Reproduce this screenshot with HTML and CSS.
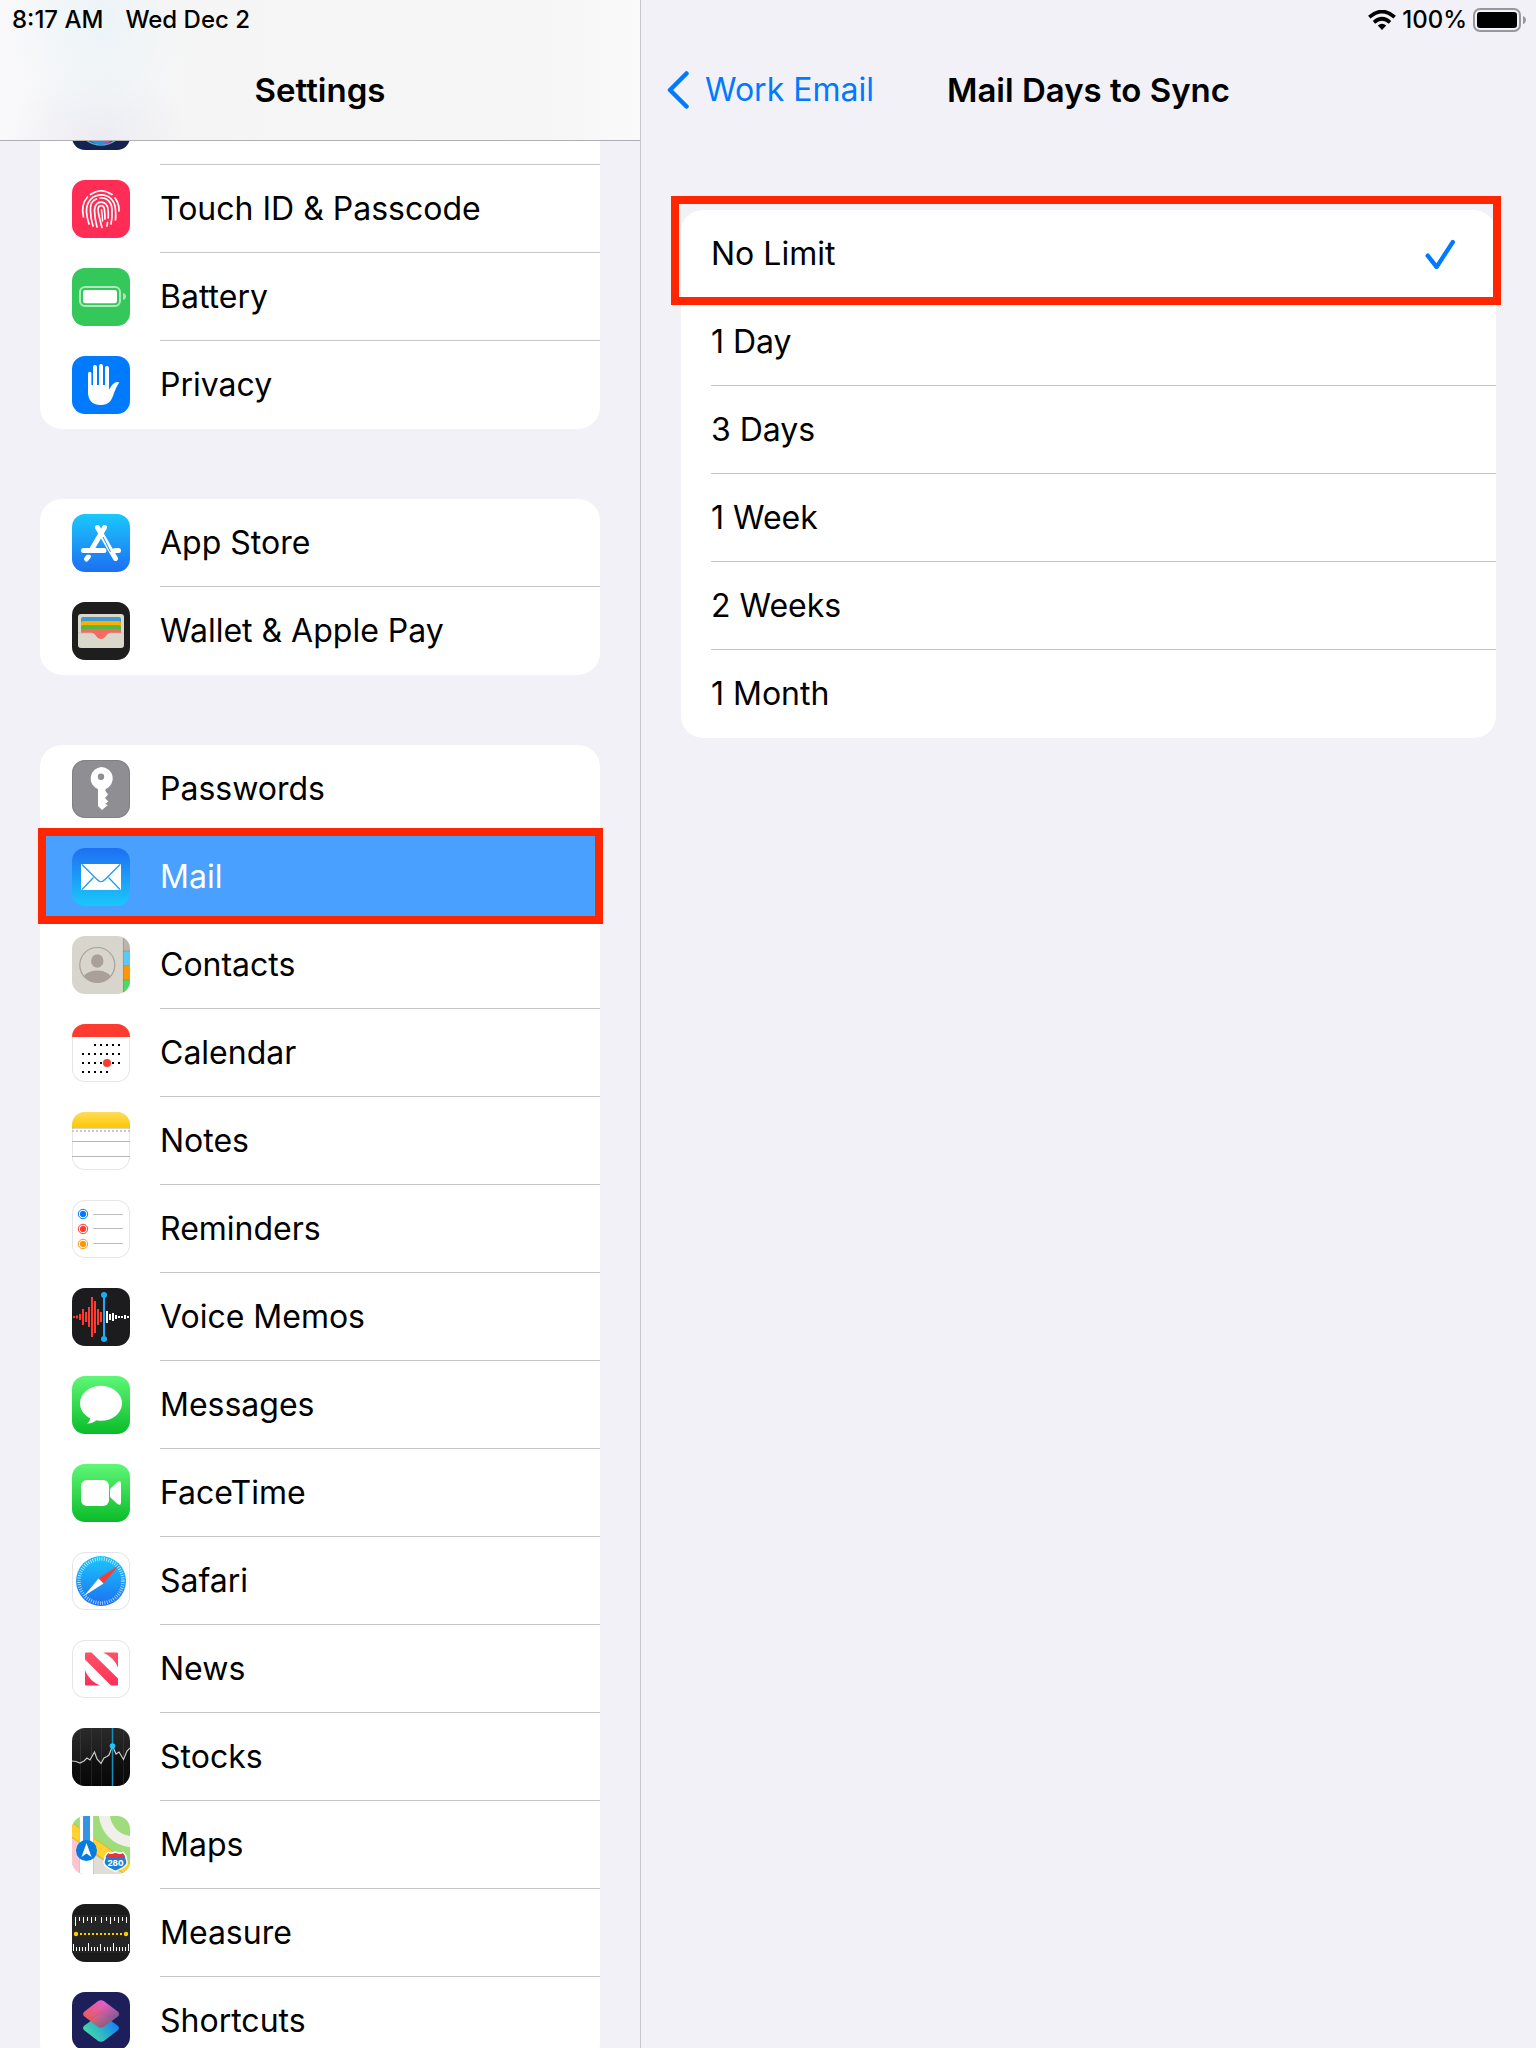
FILE: index.html
```html
<!DOCTYPE html>
<html lang="en">
<head>
<meta charset="utf-8">
<meta name="viewport" content="width=device-width, initial-scale=1">
<title>Settings</title>
<link rel="stylesheet" href="styles.css">
</head>
<body>
<div class="app">
  <aside class="sidebar">
    <header class="bar bar-sidebar">
      <div class="status"><span>8:17 AM</span><span>Wed Dec 2</span></div>
      <div class="nav"><h1 class="title">Settings</h1></div>
    </header>
    <nav class="scroller" aria-label="Settings">
      <ul class="group group-scrolled">
        <li><a class="row" href="#siri" aria-label="Siri">
          <svg class="icon" viewBox="0 0 58 58"><rect width="58" height="58" fill="#16224f"/><circle cx="29" cy="29" r="24" fill="#17468f" stroke="#5aa6c9" stroke-width="1.5"/><path d="M16 44Q29 56 41 44" fill="none" stroke="#2a8fe0" stroke-width="5"/><path d="M34 46L36 52" stroke="#e0409a" stroke-width="3"/></svg>
          <span class="label"></span></a></li>
        <li><a class="row" href="#touch-id">
          <svg class="icon" viewBox="0 0 58 58"><rect width="58" height="58" fill="#ff2d55"/><g fill="none" stroke="#fff" stroke-width="1.7" stroke-linecap="round"><path d="M18.500 14.500Q29 7 40 14.500"/><path d="M15.500 17Q8.500 25 11.500 37"/><path d="M43 18Q47.500 24 47 31"/><path d="M17 44Q15 38 14.500 32C13.500 10 43 9 43.500 30Q44 36 43.500 40"/><path d="M21 46Q18.500 38 18.500 31C18 25 20 20.500 24.500 19M28 18C35 17.500 39.500 22 40 29Q40.500 37 39 44"/><path d="M25 47Q22.500 38 22.500 30C22.500 19.500 35.500 19.500 36 29.500Q36.500 34 36.200 38M35.500 42.500L35 46"/><path d="M30 47.500Q27 37 26 30C26 24.500 32 24 32.500 30Q33 35 33 39"/><path d="M29.500 30Q30.500 36 30.500 41" stroke-width="1.500"/></g></svg>
          <span class="label">Touch ID &amp; Passcode</span></a></li>
        <li><a class="row" href="#battery">
          <svg class="icon" viewBox="0 0 58 58"><rect width="58" height="58" fill="#34c759"/><rect x="8" y="19" width="40" height="19" rx="5" fill="none" stroke="#fff" stroke-opacity=".6" stroke-width="2"/><rect x="11" y="22" width="34" height="13.300" rx="2.500" fill="#fff"/><path d="M51 25Q54 26 54 28.500T51 32Z" fill="#fff" fill-opacity=".6"/></svg>
          <span class="label">Battery</span></a></li>
        <li><a class="row" href="#privacy">
          <svg class="icon" viewBox="0 0 58 58"><rect width="58" height="58" fill="#007aff"/><g stroke="#fff" stroke-linecap="round"><path d="M17.700 17.500V36" stroke-width="3.400"/><path d="M23 11V34M29 10V34M35 12V34" stroke-width="4"/></g><path d="M16 29H37V33.500L40.500 28.500Q43.500 25.500 47.200 26.200Q44 31.500 42 37C39.500 45 37 49 28.500 49S16 44 16 36Z" fill="#fff"/></svg>
          <span class="label">Privacy</span></a></li>
      </ul>

      <ul class="group">
        <li><a class="row" href="#app-store">
          <svg class="icon" viewBox="0 0 58 58"><defs><linearGradient id="store" x2="0" y2="1"><stop stop-color="#1ac8fc"/><stop offset="1" stop-color="#1d6ff2"/></linearGradient></defs><rect width="58" height="58" fill="url(#store)"/><g fill="none" stroke="#fff" stroke-width="5" stroke-linecap="round"><path d="M32.500 13.500L20.500 34M16.500 42.500L14.500 45M25.500 13.500L43.500 44.500M11.500 36.500H32M43 36.500H46.500"/></g><path d="M31 23L38.500 38" stroke="#1d8df7" stroke-width="1"/><path d="M9 40H34" stroke="#1d84f6" stroke-width="1.500"/></svg>
          <span class="label">App Store</span></a></li>
        <li><a class="row" href="#wallet">
          <svg class="icon" viewBox="0 0 58 58"><rect width="58" height="58" fill="#1e1e1e"/><rect x="6" y="12" width="46" height="34" rx="3" fill="#dad7cc"/><path d="M9 31V17Q9 15 11 15H47Q49 15 49 17V31Z" fill="#3f9bcd"/><path d="M9 31V21Q9 19 11 19H47Q49 19 49 21V31Z" fill="#ffae00"/><path d="M9 31V25Q9 23 11 23H47Q49 23 49 25V31Z" fill="#4fbb42"/><path d="M9 31V29Q9 27 11 27H47Q49 27 49 29V31H38C34 31 34 37 29 37S24 31 20 31Z" fill="#f26d5f"/><path d="M6 31H20M38 31H52" stroke="#bebbb0" stroke-width=".7"/></svg>
          <span class="label">Wallet &amp; Apple Pay</span></a></li>
      </ul>

      <ul class="group">
        <li><a class="row" href="#passwords">
          <svg class="icon" viewBox="0 0 58 58"><rect width="58" height="58" fill="#8e8e93"/><rect x=".5" y=".5" width="57" height="57" rx="12.500" fill="none" stroke="#7f7f84"/><path d="M29.300 7A11.500 11.500 0 0 1 33.500 29.200V31L36 34.500L33 38L36.300 41.500L33 44L36 45L30 50L26 46V29.200A11.500 11.500 0 0 1 29.300 7Z" fill="#fff"/><circle cx="29" cy="16.700" r="3.200" fill="#8e8e93"/></svg>
          <span class="label">Passwords</span></a></li>
        <li class="marked marked-mail"><a class="row row-selected" href="#mail" aria-current="page">
          <svg class="icon" viewBox="0 0 58 58"><defs><linearGradient id="mail" x2="0" y2="1"><stop stop-color="#1e6ff2"/><stop offset="1" stop-color="#1ac8fb"/></linearGradient></defs><rect width="58" height="58" fill="url(#mail)"/><rect x="9" y="16" width="40" height="26" rx="1" fill="#fff"/><path d="M10 16.500L25 31.500Q29 36 33 31.500L48 16.500M10 41.500L21.500 29.500M48 41.500L36.500 29.500" fill="none" stroke="#1e97f6" stroke-width="1.200"/></svg>
          <span class="label">Mail</span></a></li>
        <li><a class="row" href="#contacts">
          <svg class="icon" viewBox="0 0 58 58"><defs><clipPath id="face"><circle cx="25.300" cy="29" r="17.500"/></clipPath></defs><rect width="58" height="58" fill="#d8d6cc"/><path d="M51 0H58V15H51Z" fill="#b9b4ac"/><path d="M51 15H58V29.500H51Z" fill="#5ac8fa"/><path d="M51 29.500H58V44H51Z" fill="#ff9500"/><path d="M51 44H58V58H51Z" fill="#4cd964"/><path d="M51.300 2V56M51 15H58M51 29.500H58M51 44H58" stroke="#7b7a70" stroke-opacity=".5" stroke-width=".8"/><circle cx="25.300" cy="29" r="17.500" fill="none" stroke="#a9a199" stroke-width="1.200"/><g fill="#a9a199"><ellipse cx="25.300" cy="25" rx="6.200" ry="6.700"/><ellipse cx="25.300" cy="43" rx="14" ry="8.500" clip-path="url(#face)"/></g></svg>
          <span class="label">Contacts</span></a></li>
        <li><a class="row" href="#calendar">
          <svg class="icon icon-light" viewBox="0 0 58 58"><rect width="58" height="13" fill="#ff3b30"/><path d="M22 21H48M10 30H48M10 39H48M10 48H36" stroke="#000" stroke-width="2" stroke-dasharray="2 4"/><circle cx="35" cy="39" r="4" fill="#ff3b30"/></svg>
          <span class="label">Calendar</span></a></li>
        <li><a class="row" href="#notes">
          <svg class="icon icon-light" viewBox="0 0 58 58"><defs><linearGradient id="pad" x2="0" y2="1"><stop stop-color="#ffdb5c"/><stop offset="1" stop-color="#fbc800"/></linearGradient></defs><rect width="58" height="15.500" fill="url(#pad)"/><path d="M0 16H58" stroke="#aaa79b"/><path d="M0 19H58" stroke="#cbcbcb" stroke-width="2" stroke-dasharray="2 2"/><path d="M0 29.500H58M0 44.500H58" stroke="#b6b6b6"/></svg>
          <span class="label">Notes</span></a></li>
        <li><a class="row" href="#reminders">
          <svg class="icon icon-light" viewBox="0 0 58 58"><g stroke-width="1"><g fill="#007aff" stroke="#007aff"><circle cx="11" cy="14" r="2.700"/><circle cx="11" cy="14" r="4.700" fill="none"/></g><g fill="#ff3b30" stroke="#ff3b30"><circle cx="11" cy="29" r="2.700"/><circle cx="11" cy="29" r="4.700" fill="none"/></g><g fill="#ff9500" stroke="#ff9500"><circle cx="11" cy="44" r="2.700"/><circle cx="11" cy="44" r="4.700" fill="none"/></g></g><path d="M21 14.500H51M21 28.500H51M21 43.500H51" stroke="#bdbdc0"/></svg>
          <span class="label">Reminders</span></a></li>
        <li><a class="row" href="#voice-memos">
          <svg class="icon" viewBox="0 0 58 58"><rect width="58" height="58" fill="#1c1b1d"/><path d="M2 28V30M5 27.500V30.500M8 26V32M11 21V37M14 24V34M17 19V39M20 9V49M23 13V45M26 21V37M29 24V34" stroke="#ff3b30" stroke-width="2"/><path d="M35 23V35M38 26V32M41 25V33M44 27V31M47 28V30M50 28V30M53 27V31M56 28V30" stroke="#fff" stroke-width="2"/><path d="M32 7V51" stroke="#1eaaf6" stroke-width="2"/><circle cx="32" cy="7" r="3" fill="#1eaaf6"/><circle cx="32" cy="51" r="3" fill="#1eaaf6"/></svg>
          <span class="label">Voice Memos</span></a></li>
        <li><a class="row" href="#messages">
          <svg class="icon" viewBox="0 0 58 58"><defs><linearGradient id="green" x2="0" y2="1"><stop stop-color="#5ff777"/><stop offset="1" stop-color="#0abc28"/></linearGradient></defs><rect width="58" height="58" fill="url(#green)"/><ellipse cx="29" cy="27.300" rx="21" ry="17.500" fill="#fff"/><path d="M18 41Q18.500 45 15 47.500Q21 47.800 25 43.500Z" fill="#fff"/></svg>
          <span class="label">Messages</span></a></li>
        <li><a class="row" href="#facetime">
          <svg class="icon" viewBox="0 0 58 58"><rect width="58" height="58" fill="url(#green)"/><rect x="9" y="16" width="28" height="26" rx="6" fill="#fff"/><path d="M38 26Q38 25 39 24L45.500 18Q49 16 49 19.500V38.500Q49 42 45.500 40L39 34Q38 33 38 32Z" fill="#fff"/></svg>
          <span class="label">FaceTime</span></a></li>
        <li><a class="row" href="#safari">
          <svg class="icon icon-light" viewBox="0 0 58 58"><circle cx="29" cy="29" r="25" fill="url(#store)"/><circle cx="29" cy="29" r="22" fill="none" stroke="#fff" stroke-opacity=".75" stroke-width="3.500" stroke-dasharray=".8 1.504"/><path d="M47 13L31.500 31.500L26.500 26.500Z" fill="#ff3b30"/><path d="M12 44L26.500 26.500L31.500 31.500Z" fill="#fff"/></svg>
          <span class="label">Safari</span></a></li>
        <li><a class="row" href="#news">
          <svg class="icon icon-light" viewBox="0 0 58 58"><defs><linearGradient id="news" gradientUnits="userSpaceOnUse" x1="0" y1="12" x2="0" y2="46"><stop stop-color="#fd5467"/><stop offset="1" stop-color="#fc3058"/></linearGradient></defs><path d="M14 12.500H19.500L46 38.500V44.500Q46 45.500 45 45.500H39L13 19.500V13.500Q13 12.500 14 12.500ZM31 12.500H45Q46 12.500 46 13.500V27.500Q41.500 17 31 12.500ZM13 30.500Q17.500 41 28 45.500H14Q13 45.500 13 44.500Z" fill="url(#news)"/></svg>
          <span class="label">News</span></a></li>
        <li><a class="row" href="#stocks">
          <svg class="icon" viewBox="0 0 58 58"><defs><linearGradient id="night" x2="0" y2="1"><stop stop-color="#2a2a2b"/><stop offset="1" stop-color="#0c0c0d"/></linearGradient></defs><rect width="58" height="58" fill="url(#night)"/><path d="M8.500 0V58M19.500 0V58M29.500 0V58M51.500 0V58" stroke="#333" stroke-width="1"/><path d="M0 33L4 33.500L8 35L12 33L15 30L18 32L22.500 24L25 31L29 35.500L32 30L35 28.500L37 27L40.500 18L44 26L47 24L51.500 31.500L55 23L58 20V58H0Z" fill="#000" fill-opacity=".35"/><path d="M0 33L4 33.500L8 35L12 33L15 30L18 32L22.500 24L25 31L29 35.500L32 30L35 28.500L37 27L40.500 18L44 26L47 24L51.500 31.500L55 23L58 20" fill="none" stroke="#c9c9c9" stroke-width="1.200"/><path d="M40.500 0V58" stroke="#178fbd" stroke-width="1.500"/><circle cx="40.500" cy="18" r="2.800" fill="#1cc5fb"/></svg>
          <span class="label">Stocks</span></a></li>
        <li><a class="row" href="#maps">
          <svg class="icon" viewBox="0 0 58 58"><rect width="58" height="58" fill="#9fdd7c"/><path d="M0 24L58 62H0Z" fill="#e0ddd6"/><path d="M0 22L9 28V58H0Z" fill="#ffc6d2"/><path d="M32-6C32 12 43 26 64 26" fill="none" stroke="#f1efe9" stroke-width="11"/><path d="M-3 12L60 56" stroke="#eab22e" stroke-width="13"/><path d="M-3 12L60 56" stroke="#ffd22f" stroke-width="11"/><path d="M8 0H21V58H8Z" fill="#fff"/><path d="M7.500 0V58M21.500 0V58" stroke="#c9c6bc" stroke-width=".8"/><path d="M11 0H18V30H11Z" fill="#3593e5"/><circle cx="14.500" cy="34.500" r="10.500" fill="#087be0"/><path d="M14.500 27L19.500 41L14.500 37.500L9.500 41Z" fill="#fff"/><path d="M36 36.500Q40 38 43.500 36Q47 38 51 36.500L54 40C53 42 55.500 44 55 47C54 52 49 52 43.500 55.500C38 52 33 52 32 47C31.500 44 34 42 33 40Z" fill="#1a7fd4" stroke="#fff" stroke-width="1.500"/><path d="M36 37.500Q40 39 43.500 37Q47 39 51 37.500L53 41.500H34.500Z" fill="#e8323c"/><text class="shield" x="43.500" y="49.500" text-anchor="middle">280</text></svg>
          <span class="label">Maps</span></a></li>
        <li><a class="row" href="#measure">
          <svg class="icon" viewBox="0 0 58 58"><rect width="58" height="58" fill="#1b1b1b"/><rect y="11" width="58" height="38" fill="#252525"/><path d="M3.500 13V22M7.500 13V17M11.500 13V19M15.500 13V17M19.500 13V19M23.500 13V17M29.500 13V19M34.500 13V17M38.500 13V20M42.500 13V17M46.500 13V19M50.500 13V17M54.500 13V19M1.500 40V47M4.500 43V47M7.500 43V47M10.500 43V47M13.500 43V47M16.500 39V47M19.500 43V47M22.500 43V47M25.500 43V47M28.500 40V47M32.500 43V47M35.500 43V47M38.500 43V47M41.500 39V47M44.500 43V47M47.500 43V47M50.500 43V47M53.500 43V47M56.500 40V47" stroke="#fff"/><path d="M8 30H50" stroke="#ffcc00" stroke-width="2" stroke-dasharray="2 2"/><circle cx="4" cy="30" r="2.200" fill="#ffcc00"/><circle cx="54" cy="30" r="2.200" fill="#ffcc00"/></svg>
          <span class="label">Measure</span></a></li>
        <li><a class="row" href="#shortcuts">
          <svg class="icon" viewBox="0 0 58 58"><defs><linearGradient id="low" x1="0" y1=".8" x2="1" y2=".3"><stop stop-color="#4be39b"/><stop offset=".5" stop-color="#2bb4c9"/><stop offset="1" stop-color="#1179ff"/></linearGradient><linearGradient id="high" x1=".2" y1=".7" x2=".7" y2=".1"><stop stop-color="#fb5f62"/><stop offset="1" stop-color="#f365d8"/></linearGradient><linearGradient id="shade" x1=".45" y1=".3" x2=".9" y2=".7"><stop stop-color="#6a5a90" stop-opacity="0"/><stop offset="1" stop-color="#6a5a90" stop-opacity=".85"/></linearGradient></defs><rect width="58" height="58" fill="#1d1f5a"/><path d="M25.500 24Q29 21.500 32.500 24L45.500 33.500Q48.500 36 45.500 38.500L32.500 48.500Q29 51 25.500 48.500L12.500 38.500Q9.500 36 12.500 33.500Z" fill="url(#low)"/><path d="M25.500 9.500Q29 7 32.500 9.500L45.500 19.500Q48.500 22 45.500 24.500L32.500 34.500Q29 37 25.500 34.500L12.500 24.500Q9.500 22 12.500 19.500Z" fill="url(#high)" fill-opacity=".92"/><path d="M25.500 9.500Q29 7 32.500 9.500L45.500 19.500Q48.500 22 45.500 24.500L32.500 34.500Q29 37 25.500 34.500L12.500 24.500Q9.500 22 12.500 19.500Z" fill="url(#shade)"/></svg>
          <span class="label">Shortcuts</span></a></li>
      </ul>
    </nav>
  </aside>

  <main class="detail">
    <header class="bar">
      <div class="status status-end">
        <svg class="wifi" viewBox="0 0 28 20" aria-label="Wi-Fi"><g fill="none" stroke="#000" stroke-width="3.600"><path d="M1.300 7.200Q14-4.200 26.700 7.200"/><path d="M6 12.300Q14 5.200 22 12.300"/></g><path d="M9.800 15.500Q14 11.800 18.200 15.500L14 20Z"/></svg>
        <span>100%</span>
        <svg class="battery" viewBox="0 0 53 24" aria-label="Battery full"><rect x="1" y="1" width="46" height="22" rx="6" fill="none" stroke="#98989c" stroke-width="2"/><rect x="4" y="4" width="40" height="16" rx="3"/><path d="M50 8Q53 9 53 12T50 16Z" fill="#98989c"/></svg>
      </div>
      <div class="nav nav-detail">
        <a class="back" href="#work-email"><svg class="chevron" viewBox="0 0 22 38" aria-hidden="true"><path d="M19.500 2.500L3 19L19.500 35.500" fill="none" stroke="currentColor" stroke-width="4.500" stroke-linecap="round" stroke-linejoin="round"/></svg>Work Email</a>
        <h2 class="title">Mail Days to Sync</h2>
      </div>
    </header>
    <form class="options">
      <ul class="group group-options">
        <li class="marked marked-limit"><label class="row option"><input class="radio" type="radio" name="sync" checked><span class="label">No Limit</span></label></li>
        <li><label class="row option"><input class="radio" type="radio" name="sync"><span class="label">1 Day</span></label></li>
        <li><label class="row option"><input class="radio" type="radio" name="sync"><span class="label">3 Days</span></label></li>
        <li><label class="row option"><input class="radio" type="radio" name="sync"><span class="label">1 Week</span></label></li>
        <li><label class="row option"><input class="radio" type="radio" name="sync"><span class="label">2 Weeks</span></label></li>
        <li><label class="row option"><input class="radio" type="radio" name="sync"><span class="label">1 Month</span></label></li>
      </ul>
    </form>
  </main>
</div>
</body>
</html>
```

FILE: styles.css
```css
* { box-sizing: border-box; }

body {
  margin: 0;
  background: #f2f1f7;
  color: #000;
  font-family: Inter, "Liberation Sans", sans-serif;
  font-size: 32px;
  line-height: 40px;
}

a { color: inherit; text-decoration: none; }

.app {
  display: grid;
  grid-template-columns: 5fr 7fr;
  height: 100vh;
  overflow: hidden;
}

.sidebar {
  display: flex;
  flex-direction: column;
  min-width: 0;
  min-height: 0;
}

.detail {
  min-width: 0;
  border-left: 1px solid #c6c6c9;
}

/* Top bars */
.bar {
  flex: none;
  border-bottom: 1px solid transparent;
}

.bar-sidebar {
  border-bottom-color: #b0b0b4;
  background:
    radial-gradient(ellipse 90px 110px at 100px 20px, #ecf4f7, transparent),
    radial-gradient(ellipse 90px 80px at 100px 140px, #ebebf2, transparent),
    linear-gradient(90deg, #f9f9fc, #f5f5f5 30%, #f6f6f6 85%, #fafafa);
}

.status {
  display: flex;
  align-items: center;
  gap: 22px;
  height: 40px;
  padding: 0 12px;
  font-size: 24px;
  font-weight: 500;
}

.status-end {
  justify-content: flex-end;
  gap: 6px;
  padding: 0 10px;
}

.wifi { width: 28px; height: 20px; }
.battery { width: 53px; height: 24px; }

.nav {
  display: flex;
  align-items: center;
  justify-content: center;
  height: 100px;
}

.nav-detail {
  display: grid;
  grid-template-columns: 1fr auto 1fr;
  padding: 0 26px;
}

.title {
  margin: 0;
  font-size: 33px;
  font-weight: 600;
  line-height: 40px;
}

.back {
  display: flex;
  align-items: center;
  gap: 16px;
  color: #007aff;
}

.chevron { width: 22px; height: 38px; }

/* Lists */
.scroller {
  flex: 1;
  display: flex;
  flex-direction: column;
  gap: 70px;
  min-height: 0;
  padding: 0 40px;
  overflow: hidden;
}

.group {
  flex: none;
  margin: 0;
  padding: 0;
  border-radius: 22px;
  background: #fff;
  list-style: none;
}

.group-scrolled { margin-top: -64px; }

.row {
  display: flex;
  align-items: center;
  gap: 30px;
  height: 88px;
  padding-left: 32px;
}

.row-selected {
  background: #4aa0ff;
  color: #fff;
}

.icon {
  flex: none;
  width: 58px;
  height: 58px;
  border-radius: 13px;
}

.icon-light {
  background: #fff;
  box-shadow: 0 0 0 1px #e6e6e8 inset;
}

.label {
  display: flex;
  flex: 1;
  align-items: center;
  align-self: stretch;
  border-bottom: 1px solid #c6c6c8;
}

.group > li:last-child .label { border-bottom-color: transparent; }

.shield {
  fill: #fff;
  font-size: 8px;
  font-weight: 800;
}

/* Sync choices */
.options { padding: 69px 40px; }

.option {
  position: relative;
  padding-left: 30px;
}

.radio {
  position: absolute;
  top: 29px;
  right: 41px;
  width: 30px;
  height: 30px;
  margin: 0;
  appearance: none;
}

.radio:checked {
  background: #007aff;
  clip-path: path("M1 18.100A2.200 2.200 0 0 1 4.400 15.300L11.500 24.200L26.200 1.500A2.200 2.200 0 0 1 29.800 3.900L13.400 29.200Q11.800 30.800 10 29.400Z");
}

/* Red call-outs drawn over the rows */
.marked { position: relative; }

.marked::after {
  content: "";
  position: absolute;
  z-index: 1;
  border: 8px solid #ff2600;
  pointer-events: none;
}

.marked-mail::after { inset: -5px -3px -3px -2px; }
.marked-limit::after { inset: -14px -5px -7px -10px; }
```
